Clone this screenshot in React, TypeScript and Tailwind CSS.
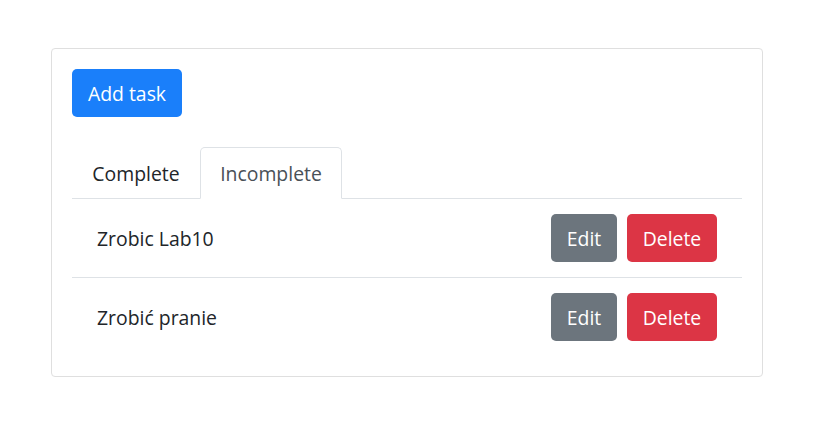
import React, { useState } from "react";

interface Task {
  id: number;
  name: string;
}

const tasks: Task[] = [
  { id: 1, name: "Zrobic Lab10" },
  { id: 2, name: "Zrobić pranie" },
];

const font = "font-['Segoe_UI','Open_Sans','Noto_Sans',sans-serif]";

export default function App() {
  const [tab, setTab] = useState<"complete" | "incomplete">("incomplete");

  return (
    <div className={`min-h-[431px] bg-white pt-[48px] pl-[51px] text-[19.4px] text-[#212529] ${font}`}>
      <div className="w-[712px] rounded-[4px] border border-[#dfdfdf] p-[20px]">
        <button className="h-[48px] w-[110px] rounded-[5px] bg-[#1a7ffa] pt-[2px] leading-[30px] text-white">
          Add task
        </button>

        {/* tabs */}
        <div className="mt-[30px] flex border-b border-[#dee2e6]">
          <button
            onClick={() => setTab("complete")}
            className={
              tab === "complete"
                ? "-mb-px h-[52px] w-[128px] rounded-t-[5px] border border-[#dee2e6] border-b-white bg-white pt-[2px] text-[#495057]"
                : "-mb-px h-[52px] w-[128px] border border-transparent pt-[2px] text-[#212529]"
            }
          >
            Complete
          </button>
          <button
            onClick={() => setTab("incomplete")}
            className={
              tab === "incomplete"
                ? "-mb-px h-[52px] w-[142px] rounded-t-[5px] border border-[#dee2e6] border-b-white bg-white pt-[2px] text-[#495057]"
                : "-mb-px h-[52px] w-[142px] border border-transparent pt-[2px] text-[#212529]"
            }
          >
            Incomplete
          </button>
        </div>

        {/* list */}
        <div>
          {tasks.map((t, i) => (
            <div
              key={t.id}
              className={
                "flex items-center justify-between px-[25px] py-[15px]" +
                (i > 0 ? " border-t border-[#dee2e6]" : "")
              }
            >
              <span className="pt-[2px] leading-[30px]">{t.name}</span>
              <div className="flex gap-[10px]">
                <button className="h-[48px] w-[66px] rounded-[5px] bg-[#6c757d] pt-[2px] text-white">
                  Edit
                </button>
                <button className="h-[48px] w-[90px] rounded-[5px] bg-[#dc3545] pt-[2px] text-white">
                  Delete
                </button>
              </div>
            </div>
          ))}
        </div>
      </div>
    </div>
  );
}
